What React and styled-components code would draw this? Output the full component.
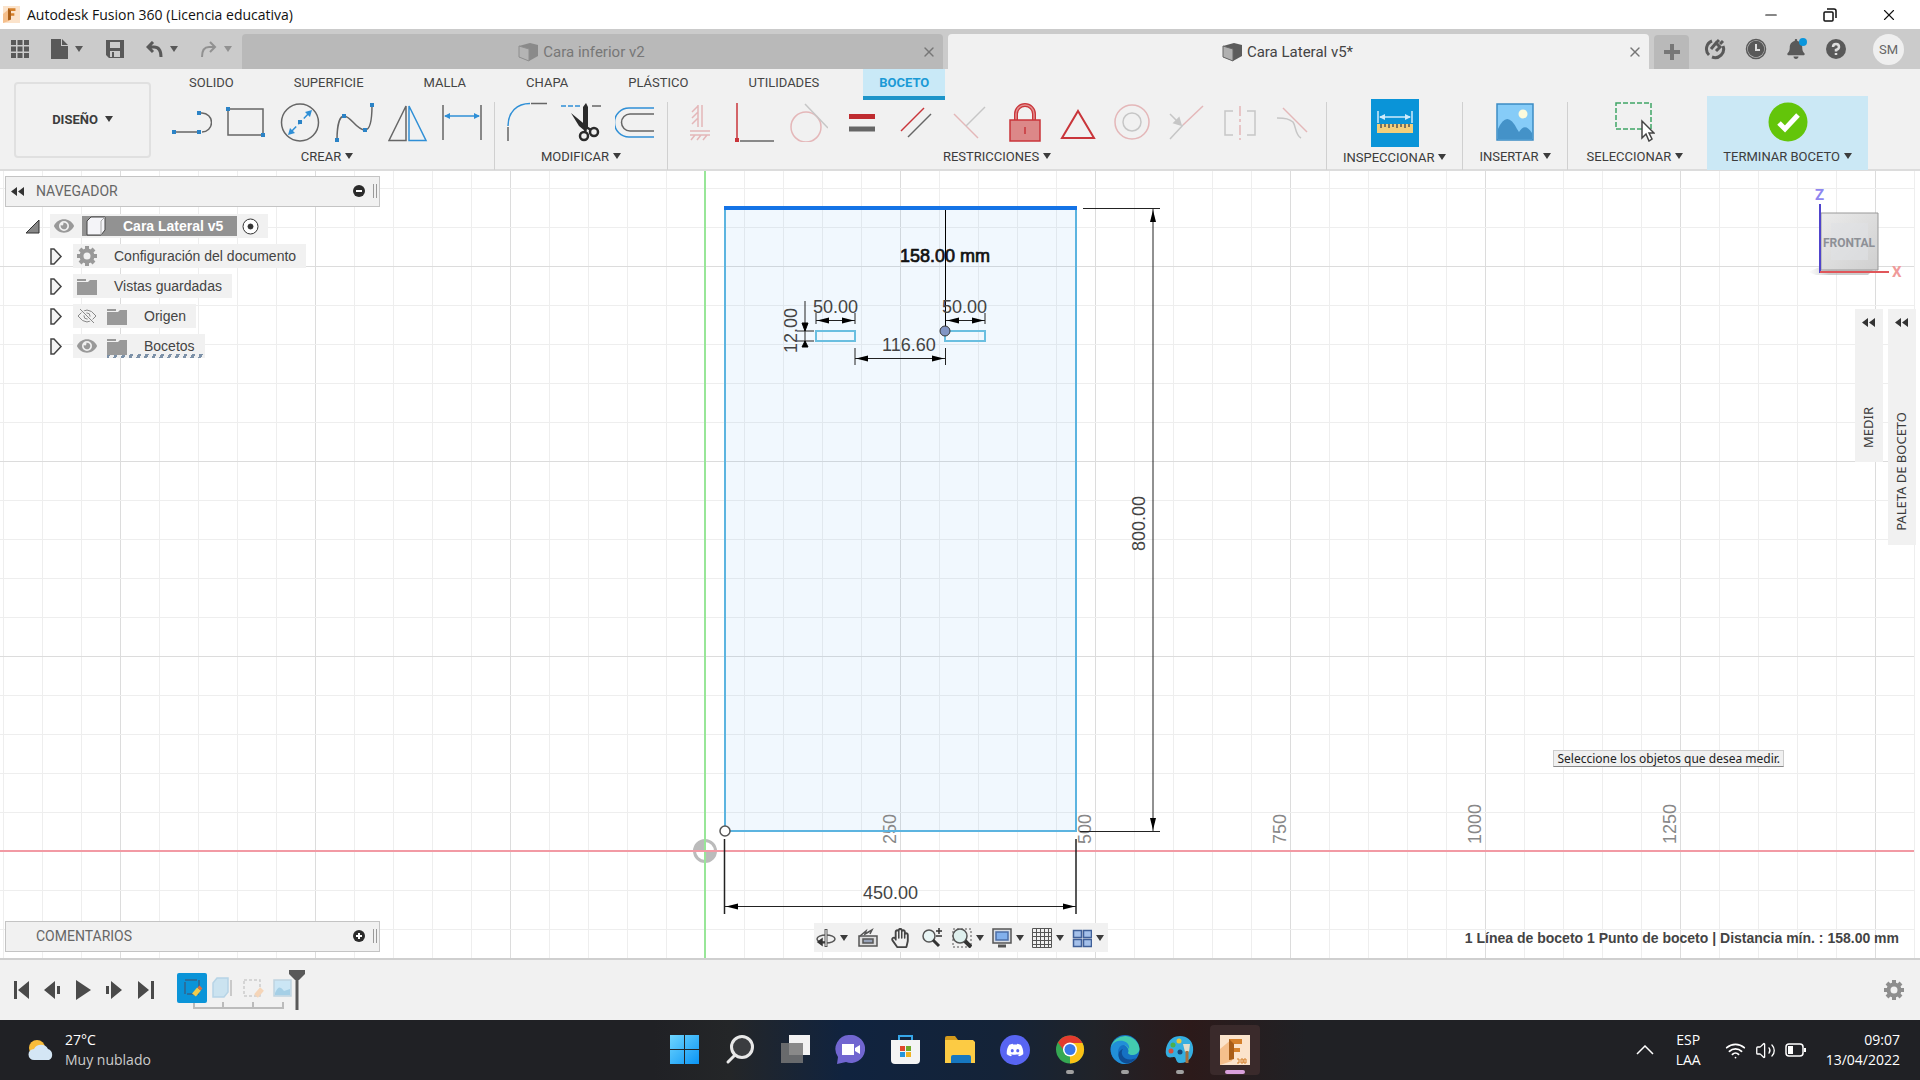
import React from "react";
import styled, { createGlobalStyle } from "styled-components";
import { FaBell, FaDiscord, FaEye, FaRegHandPaper } from "react-icons/fa";
import { Minus, Volume2, Wifi, X } from "lucide-react";

const GlobalStyle = createGlobalStyle`
  * {
    box-sizing: border-box;
  }
  body {
    margin: 0;
    background: #fff;
    color: #3c3c3c;
    font-family: Roboto, "Liberation Sans", sans-serif;
    font-size: 13px;
  }
  button {
    margin: 0;
    padding: 0;
    border: 0;
    background: none;
    color: inherit;
    font: inherit;
    cursor: pointer;
  }
  svg {
    display: block;
    flex: none;
  }
`;

const Window = styled.div`
  display: flex;
  flex-direction: column;
  min-height: 100vh;
`;

const Caret = styled.span`
  display: inline-block;
  border: 4px solid transparent;
  border-top: 6px solid ${({ $color }) => $color || "#3c3c3c"};
  border-bottom: 0;
`;

/* ---------- title bar ---------- */

const TitleBar = styled.header`
  display: flex;
  align-items: center;
  height: 29px;
  padding: 0 2px 0 3px;
  gap: 7px;
  color: #111;
  font-family: "Open Sans", sans-serif;
`;

const Title = styled.h1`
  flex: 1;
  margin: 0;
  font-size: 14px;
  font-weight: 400;
`;

const WindowButtons = styled.div`
  display: flex;
`;

const WindowButton = styled.button`
  display: flex;
  align-items: center;
  justify-content: center;
  width: 59px;
  height: 29px;
`;

/* ---------- document tabs ---------- */

const Strip = styled.div`
  display: flex;
  align-items: flex-end;
  height: 40px;
  background: #cbcbcb;
`;

const QuickTools = styled.div`
  display: flex;
  align-items: center;
  justify-content: space-between;
  width: 242px;
  height: 40px;
  padding: 0 10px 0 11px;
`;

const QuickButton = styled.button`
  display: flex;
  align-items: center;
  gap: 7px;
  opacity: ${({ $dim }) => ($dim ? 0.5 : 1)};
`;

const DocTabs = styled.div`
  display: flex;
  flex: 1;
  gap: 5px;
`;

const DocTab = styled.div`
  display: flex;
  flex: 1;
  align-items: center;
  height: 35px;
  padding-right: 6px;
  border-radius: 4px 4px 0 0;
  background: ${({ $active }) => ($active ? "#f1f1f1" : "#b9b9b9")};
  color: ${({ $active }) => ($active ? "#444" : "#777")};
`;

const DocName = styled.button`
  display: flex;
  flex: 1;
  align-items: center;
  justify-content: center;
  gap: 4px;
  font-size: 15px;
`;

const CloseTab = styled.button`
  display: flex;
  color: #777;
`;

const NewTab = styled.button`
  display: flex;
  align-items: center;
  justify-content: center;
  width: 35px;
  height: 34px;
  margin-left: 5px;
  border-radius: 4px 4px 0 0;
  background: #b9b9b9;
`;

const Account = styled.div`
  display: flex;
  align-items: center;
  height: 40px;
  padding: 0 16px 0 15px;
  gap: 19px;
  color: #595959;
`;

const Avatar = styled.button`
  width: 31px;
  height: 31px;
  margin-left: 7px;
  border-radius: 50%;
  background: #efefef;
  color: #666;
`;

const BellButton = styled.button`
  position: relative;
  &::after {
    content: "";
    position: absolute;
    top: -1px;
    right: -1px;
    width: 8px;
    height: 8px;
    border-radius: 50%;
    background: #0a96dc;
  }
`;

/* ---------- ribbon ---------- */

const Ribbon = styled.div`
  display: flex;
  height: 102px;
  border-bottom: 2px solid #dcdcdc;
  background: #f1f1f1;
`;

const Workspace = styled.button`
  display: flex;
  align-items: center;
  justify-content: center;
  gap: 7px;
  width: 137px;
  height: 76px;
  margin: 13px 9px 0 14px;
  padding-bottom: 2px;
  border: 2px solid #e0e0e0;
  border-radius: 4px;
  font-weight: 700;
`;

const RibbonMain = styled.div`
  flex: 1;
`;

const RibbonTabs = styled.nav`
  display: flex;
  gap: 28px;
  padding-left: 13px;
`;

const RibbonTab = styled.button`
  height: 31px;
  padding: 0 16px;
  border-bottom: 4px solid ${({ $active }) => ($active ? "#1c94c9" : "transparent")};
  background: ${({ $active }) => ($active ? "#c9e9f7" : "none")};
  color: ${({ $active }) => ($active ? "#1a9ad6" : "#444")};
  font-weight: ${({ $active }) => ($active ? 700 : 400)};
`;

const Groups = styled.div`
  display: flex;
  align-items: flex-end;
  height: 70px;
`;

const Group = styled.section`
  display: flex;
  flex-direction: column;
  align-items: center;
  height: 68px;
  padding: 0 ${({ $pad }) => $pad || 12}px;
  border-right: ${({ $last }) => ($last ? 0 : 1)}px solid #d0d0d0;
`;

const FinishGroup = styled(Group)`
  height: 74px;
  margin-left: 5px;
  padding: 6px 16px 0;
  border: 0;
  background: #cbe8f5;
`;

const Tools = styled.div`
  display: flex;
  align-items: center;
  height: 42px;
  gap: 14px;
`;

const ToolButton = styled.button`
  display: flex;
  align-items: center;
  justify-content: center;
  width: ${({ $selected }) => ($selected ? 48 : 40)}px;
  height: ${({ $selected }) => ($selected ? 48 : 40)}px;
  background: ${({ $selected }) => ($selected ? "#0a94d8" : "none")};
  opacity: ${({ $dim }) => ($dim ? 0.3 : 1)};
`;

const GroupLabel = styled.button`
  display: flex;
  align-items: center;
  gap: 4px;
  height: 28px;
  white-space: nowrap;
`;

/* ---------- canvas ---------- */

const Canvas = styled.main`
  position: relative;
  flex: 1;
  min-height: 640px;
  overflow: hidden;
  border-bottom: 2px solid #cfcfcf;
`;

const Drawing = styled.svg`
  position: absolute;
  inset: 0;
  width: 100%;
  height: 100%;
  font-family: "Liberation Sans", Arial, sans-serif;
  font-size: 18px;
`;

const Overlay = styled.div`
  position: absolute;
  inset: 0;
  display: grid;
  grid-template-columns: 1fr auto 1fr;
  padding: 5px 4px 6px 5px;
`;

const LeftDock = styled.aside`
  display: flex;
  flex-direction: column;
  justify-content: space-between;
  font-family: "Liberation Sans", Arial, sans-serif;
`;

const PanelHeader = styled.div`
  display: flex;
  align-items: center;
  width: 375px;
  height: 31px;
  padding: 0 2px 1px 5px;
  border: 1px solid #c4c4c4;
  background: #f1f1f1;
`;

const PanelTitle = styled.h2`
  flex: 1;
  margin: 0;
  padding-left: 12px;
  color: #666;
  font-family: Roboto, sans-serif;
  font-size: 14px;
  font-weight: 400;
`;

const Grip = styled.span`
  width: 4px;
  height: 14px;
  margin-left: 8px;
  border: solid #999;
  border-width: 0 1px;
`;

const PanelToggle = styled.button`
  width: 13px;
`;

const Tree = styled.ul`
  display: flex;
  flex-direction: column;
  gap: 6px;
  margin: 7px 0 0;
  padding: 0;
  list-style: none;
`;

const TreeRow = styled.li`
  display: flex;
  align-items: center;
  height: 24px;
  padding-left: ${({ $root }) => ($root ? 20 : 45)}px;
  gap: 10px;
`;

const TreeItem = styled.div`
  display: flex;
  align-items: center;
  height: 24px;
  padding: 0 ${({ $root }) => ($root ? 9 : 10)}px 0 4px;
  gap: ${({ $root }) => ($root ? 5 : 10)}px;
  background: #f1f1f1;
  color: #444;
  svg {
    color: #999;
  }
`;

const TreeName = styled.span`
  padding-left: 7px;
  font-size: 14px;
`;

const RootName = styled.span`
  display: flex;
  align-items: center;
  height: 20px;
  margin-left: 3px;
  padding: 0 14px 0 3px;
  gap: 16px;
  background: #929292;
  color: #fff;
  font-size: 14px;
  font-weight: 700;
`;

const Pending = styled.span`
  display: flex;
  align-items: center;
  height: 24px;
  margin-right: -10px;
  padding-right: 10px;
  gap: 10px;
  background: repeating-linear-gradient(115deg, #7c91a8 0 3px, transparent 3px 7px) 0 100% / 100% 4px no-repeat;
`;

const ViewBar = styled.div`
  display: flex;
  align-items: center;
  align-self: end;
  height: 29px;
  padding: 0 4px 0 2px;
  gap: 8px;
  background: #f1f1f1;
`;

const ViewButton = styled.button`
  display: flex;
  align-items: center;
  padding: 0 ${({ $menu }) => ($menu ? 0 : 2)}px;
  gap: 4px;
`;

const RightDock = styled.aside`
  display: flex;
  flex-direction: column;
  align-items: flex-end;
`;

const Palettes = styled.div`
  display: flex;
  flex: 1;
  align-items: flex-start;
  gap: 5px;
  margin-top: 13px;
`;

const Palette = styled.button`
  display: flex;
  flex-direction: column;
  align-items: center;
  justify-content: space-between;
  width: 28px;
  height: ${({ $tall }) => ($tall ? 236 : 153)}px;
  padding: 9px 2px 14px 0;
  background: #f1f1f1;
  span {
    writing-mode: vertical-rl;
    transform: rotate(180deg);
    font-family: "Noto Sans", sans-serif;
  }
`;

const Status = styled.output`
  padding: 0 17px 6px 0;
  color: #444;
  font-family: "Liberation Sans", Arial, sans-serif;
  font-size: 14px;
  font-weight: 700;
`;

const Hint = styled.div`
  position: absolute;
  right: 136px;
  bottom: 191px;
  padding: 0 3px;
  border: 1px solid #ccc;
  border-bottom-color: #888;
  background: #f0f0f0;
  color: #222;
  font-family: "Noto Sans", sans-serif;
  font-size: 12px;
  line-height: 15px;
`;

/* ---------- timeline ---------- */

const Timeline = styled.footer`
  display: flex;
  align-items: center;
  height: 60px;
  padding: 0 16px 0 13px;
  background: #f1f1f1;
  color: #8e8e8e;
`;

const Transport = styled.div`
  display: flex;
  gap: 13px;
`;

const Features = styled.div`
  flex: 1;
  padding-left: 22px;
`;

/* ---------- taskbar ---------- */

const Taskbar = styled.div`
  display: grid;
  grid-template-columns: 1fr auto 1fr;
  align-items: center;
  height: 60px;
  padding: 0 20px;
  background: linear-gradient(90deg, #202125 0 34%, #242628 38%, #10233f 44%, #142338 52%, #202329 57%, #2c1a1a 62%, #202125 68%);
  color: #fff;
  font-family: "Open Sans", sans-serif;
  font-size: 14px;
  line-height: 20px;
`;

const Weather = styled.div`
  display: flex;
  align-items: center;
  padding-left: 8px;
  gap: 10px;
  small {
    color: #ccc;
    font-size: 14px;
  }
`;

const Apps = styled.div`
  display: flex;
  gap: 5px;
`;

const AppButton = styled.button`
  display: flex;
  flex-direction: column;
  align-items: center;
  width: 50px;
  height: 50px;
  padding-top: 10px;
  gap: 5px;
  border-radius: 4px;
  background: ${({ $current }) => ($current ? "#3a2a2b" : "none")};
  &::after {
    content: "";
    width: ${({ $current }) => ($current ? 20 : 8)}px;
    height: 4px;
    border-radius: 2px;
    background: ${({ $current, $open }) => ($current ? "#d9a0dc" : $open ? "#a0a0a0" : "none")};
  }
`;

const Tray = styled.div`
  display: flex;
  align-items: center;
  justify-content: flex-end;
`;

const TrayText = styled.div`
  margin-left: ${({ $gap }) => $gap}px;
  text-align: ${({ $right }) => ($right ? "right" : "center")};
`;

const TrayIcons = styled.div`
  display: flex;
  align-items: center;
  margin-left: 24px;
  gap: 9px;
`;

/* ---------- icons ---------- */

const GREY = "#666";
const BLUE = "#2f8fd6";
const RED = "#c9353a";

const Dot = ({ x, y, color = "#2b83c6" }) => (
  <rect x={x - 2} y={y - 2} width="4" height="4" fill={color} stroke="none" />
);

const Glyph = ({ size = 40, w = size, h = size, children, ...rest }) => (
  <svg width={w} height={h} viewBox={`0 0 ${w} ${h}`} fill="none" stroke={GREY} strokeWidth="1.5" aria-hidden="true" {...rest}>
    {children}
  </svg>
);

const createTools = {
  Línea: (
    <>
      <path d="M2 30H27M27 11h3a9.5 9.5 0 0 1 0 19" />
      <Dot x={2} y={30} />
      <Dot x={27} y={30} />
      <Dot x={27} y={11} />
    </>
  ),
  Rectángulo: (
    <>
      <path d="M2 7H37V33H2Z" />
      <Dot x={2} y={7} />
      <Dot x={37} y={33} />
    </>
  ),
  Círculo: (
    <>
      <circle cx="20" cy="20.5" r="18.5" />
      <path d="M10 31 30 10" stroke={BLUE} strokeDasharray="9 3 5 3" />
      <path d="M8 33l2-7 5 5zM32 8l-7 2 5 5z" fill={BLUE} stroke="none" />
      <Dot x={20} y={20} />
    </>
  ),
  Spline: (
    <>
      <path d="M3 38C3 26 5 14 10 14C17 14 22 28 31 28C37 28 38 14 38 3" />
      <Dot x={3} y={38} />
      <Dot x={10} y={14} />
      <Dot x={31} y={28} />
      <Dot x={38} y={3} />
    </>
  ),
  Simetría: (
    <>
      <path d="M1 38.5 18 4V38.5Z" />
      <path d="M21 4 38 38.5H21Z" stroke={BLUE} />
    </>
  ),
  Cota: (
    <>
      <path d="M1 3V38M39 3V38" />
      <path d="M3 14H37" stroke={BLUE} />
      <path d="M2 14l6-3v6zM38 14l-6-3v6z" fill={BLUE} stroke="none" />
    </>
  ),
};

const modifyTools = {
  Empalme: (
    <>
      <path d="M1 39V25M24 1.5H40" />
      <path d="M1 24C1 10 10 1.5 23 1.5" stroke={BLUE} />
    </>
  ),
  Recortar: (
    <>
      <path d="M0 4H21" stroke={BLUE} strokeDasharray="5 2" />
      <path d="M31 4H40" />
      <path d="M10 11 27 25 24 29 18 24ZM22 5 25 1 27 5V27H22Z" fill="#2b2b2b" stroke="none" />
      <circle cx="23" cy="34" r="4" stroke="#2b2b2b" strokeWidth="2.5" />
      <circle cx="33" cy="30" r="4" stroke="#2b2b2b" strokeWidth="2.5" />
      <path d="M24 31 25 25 30 28" stroke="#2b2b2b" strokeWidth="2.5" />
    </>
  ),
  Desfase: (
    <>
      <path d="M39 6H14A14 14 0 0 0 14 35H39" stroke={BLUE} />
      <path d="M39 12H15A8.5 8.5 0 0 0 15 29H39" />
    </>
  ),
};

const constraints = [
  ["Fijar", true, <path key="p" d="M18 3V25M22 3V25M18 4l-6 6M18 10l-6 6M18 16l-6 6M10 29H30M10 33H30M15 33l-4 5M21 33l-4 5M27 33l-4 5" stroke={RED} />],
  ["Perpendicular", false, <g key="p"><path d="M3 1V36" stroke={RED} /><path d="M6 39H40" /><Dot x={3} y={38} color={RED} /></g>],
  ["Tangente", true, <g key="p"><circle cx="18" cy="25" r="15" stroke={RED} /><path d="M17 2 40 26" /></g>],
  ["Igual", false, <g key="p"><path d="M7 14.5H33" stroke="#bf2c30" strokeWidth="5" /><path d="M7 27H33" strokeWidth="5" /></g>],
  ["Paralelo", false, <g key="p"><path d="M5 29 28 6" stroke={RED} /><path d="M12 35 35 12" /></g>],
  ["Coincidente", true, <g key="p"><path d="M4 12 28 36" stroke={RED} /><path d="M16 24 35 5" /></g>],
  ["Bloquear", false, <g key="p"><path d="M12 19V12a9 9 0 0 1 18 0V19" stroke={RED} strokeWidth="4" /><path d="M12 19V12a9 9 0 0 1 18 0V19" stroke="#e28d8d" /><path d="M6 18H36V39H6Z" fill="#dc8888" stroke={RED} /><path d="M21 25v7" stroke={RED} /></g>],
  ["Punto medio", false, <path key="p" d="M20 9 36 36H4Z" stroke={RED} strokeWidth="2" />],
  ["Concéntrico", true, <g key="p"><circle cx="20" cy="20" r="17" stroke={RED} /><circle cx="20" cy="20" r="9" /></g>],
  ["Colineal", true, <g key="p"><path d="M4 37 17 23M4 12 14 22" /><path d="M15 23l-7-2 5-5z" fill={GREY} /><path d="M17 23 37 4" stroke={RED} /></g>],
  ["Simétrico", true, <g key="p"><path d="M13 9H5V33H13M27 9H35V33H27" /><path d="M20 4V38" stroke={RED} strokeDasharray="10 3 3 3" /></g>],
  ["Curvatura", true, <g key="p"><path d="M9 6 33 30" stroke={RED} /><path d="M3 16C12 16 15 17 19 20C22 24 21 33 27 36" /></g>],
];

const DocCube = ({ dim }) => (
  <svg width="21" height="20" viewBox="0 0 21 20" opacity={dim ? 0.5 : 1} aria-hidden="true">
    <path d="M1 4 12 1 20 3V14L11 19 1 15Z" fill="#5c5c5c" />
    <path d="M1 4 11 7V19L1 15Z" fill="#b0b0b0" stroke="#666" />
  </svg>
);

const FusionLogo = ({ size, label }) => (
  <svg width={size} height={size} viewBox="0 0 30 30" aria-hidden="true">
    <path d="M0 0H30V30H0Z" fill="#fbe3cb" />
    <path d="M0 14 12 4V26L0 30Z" fill="#f5bf8c" />
    <path d="M9 4H22V9H14V13H20V17H14V24L9 25Z" fill="#d5812c" />
    <path d="M9 4 14 9V24L9 25Z" fill="#a85d18" />
    {label && <path d="M17 24h2v4h-2M21 24h2v4h-2zM25 24h-1v4h2v-4z" stroke="#d5812c" fill="none" />}
  </svg>
);

const Gear = () => (
  <svg width="20" height="20" viewBox="0 0 20 20" fill="none" stroke="currentColor" aria-hidden="true">
    <circle cx="10" cy="10" r="5.5" strokeWidth="4" />
    <path
      d="M10 0V4M10 16V20M0 10H4M16 10H20M3 3 6 6M14 14 17 17M3 17 6 14M14 6 17 3"
      strokeWidth="4"
    />
  </svg>
);

const HiddenEye = () => (
  <svg width="20" height="16" viewBox="0 0 20 16" fill="none" stroke="#888" aria-hidden="true">
    <path d="M1 8Q10-4 19 8Q10 20 1 8Z" />
    <circle cx="10" cy="8" r="3" />
    <path d="M3 1 17 15" stroke="#f1f1f1" strokeWidth="3" />
    <path d="M3 1 17 15" />
  </svg>
);

const Rewind = () => (
  <svg width="13" height="9" viewBox="0 0 13 9" fill="#333" aria-hidden="true">
    <path d="M6 0V9L0 4.5ZM13 0V9L7 4.5Z" />
  </svg>
);

const ToggleIcon = ({ plus }) => (
  <svg width="12" height="12" viewBox="0 0 12 12" aria-hidden="true">
    <circle cx="6" cy="6" r="6" fill="#2b2b2b" />
    <path d={plus ? "M3 6H9M6 3V9" : "M3 6H9"} stroke="#fff" strokeWidth="2" />
  </svg>
);

const Expander = () => (
  <svg width="13" height="17" viewBox="0 0 13 17" fill="#f4f4f4" stroke="#444" strokeWidth="1.5" aria-hidden="true">
    <path d="M1 1H4L11 8.5 4 16H1Z" />
  </svg>
);

const Folder = () => (
  <svg width="20" height="17" viewBox="0 0 20 17" fill="#999" aria-hidden="true">
    <path d="M0 1H9V3H0ZM0 4H11L13 2H20V17H0Z" />
  </svg>
);

/* ---------- sketch ---------- */

const UNIT = 39;
const range = (from, to) => Array.from({ length: to - from + 1 }, (_, i) => from + i);

// Grid lines around the origin, every fifth one is stronger
const Grid = () => (
  <g strokeWidth="1">
    {range(-18, 31).map(k => (
      <path key={`v${k}`} d={`M${k * UNIT + 0.5} -681V108`} stroke={k % 5 ? "#eeeeee" : "#dcdcdc"} />
    ))}
    {range(-17, 2).map(k => (
      <path key={`h${k}`} d={`M-705 ${k * UNIT + 0.5}H1209`} stroke={k % 5 ? "#eeeeee" : "#dcdcdc"} />
    ))}
  </g>
);

const Dimension = ({ x, y, length, vertical, arrow = 12 }) => (
  <g transform={`translate(${x} ${y}) rotate(${vertical ? 90 : 0})`}>
    <path d={`M0 0H${length}`} stroke="#222" />
    <path
      d={`M1 0l${arrow}-3v6zM${length - 1} 0l${-arrow}-3v6z`}
      fill="#000"
    />
  </g>
);

const VerticalText = ({ x, y, children, fill }) => (
  <text transform={`translate(${x} ${y}) rotate(-90)`} fill={fill}>
    {children}
  </text>
);

const Sketch = () => (
  <Drawing viewBox="0 0 1920 787" preserveAspectRatio="xMidYMid slice">
    <g transform="translate(705 680)">
      <Grid />
      <path d="M20-643H371V-20H20Z" fill="#0a8ce6" fillOpacity="0.06" />
      <circle r="10.5" fill="#fff" stroke="#bbb" strokeWidth="3" />
      <path d="M0 0V-10A10 10 0 0 0-10 0ZM0 0V10A10 10 0 0 0 10 0Z" fill="#bbb" />
      <path d="M0-681V108" stroke="#98e698" strokeWidth="2" />
      <path d="M-705 0H1209" stroke="#f29aa4" strokeWidth="2" />
      {range(1, 5).map(k => (
        <VerticalText key={k} x={k * 5 * UNIT - 4} y={-7} fill="#888">
          {k * 250}
        </VerticalText>
      ))}
      <path d="M20-643V-20H371V-643" fill="none" stroke="#5cb4e0" strokeWidth="2" />
      <path d="M19-643H372" stroke="#1473e6" strokeWidth="4" />
      <path d="M111-520H150V-510H111ZM240-520H280V-510H240Z" fill="none" stroke="#6bbfe0" strokeWidth="2" />
      <g stroke="#222" fill="none">
        <path d="M378-642.5H455M375-19.5H455" />
        <path d="M19.5-12V63M371-12V63" strokeWidth="1.5" />
        <path d="M150-503V-486M240.5-503V-486M111-538V-527M150-538V-527M280-538V-527" />
        <path d="M100-550V-506M92-520H109M92-510H109" />
        <path d="M240.5-641V-520" stroke="#000" />
      </g>
      <path d="M100-520l-3-8h6zM100-510l-3 6h6z" fill="#000" stroke="#000" />
      <Dimension x={448} y={-642} length={622} vertical />
      <Dimension x={20} y={55.5} length={351} />
      <Dimension x={150} y={-492.5} length={90} />
      <Dimension x={111} y={-530.5} length={39} />
      <Dimension x={241} y={-530.5} length={39} />
      <g fill="#444">
        <text x="108" y="-538">50.00</text>
        <text x="237" y="-538">50.00</text>
        <text x="177" y="-500">116.60</text>
        <text x="158" y="48">450.00</text>
        <VerticalText x={92} y={-498}>12.00</VerticalText>
        <VerticalText x={440} y={-300}>800.00</VerticalText>
      </g>
      <text x="195" y="-589" fill="#111" stroke="#111" strokeWidth="0.7">158.00 mm</text>
      <circle cx="240" cy="-520" r="5" fill="#8195c4" stroke="#333" />
      <circle cx="20" cy="-20" r="5" fill="#fff" stroke="#555" strokeWidth="1.5" />
    </g>
  </Drawing>
);

const ViewCube = () => (
  <svg width="114" height="120" viewBox="0 0 114 120" fontFamily="Roboto, sans-serif" fontWeight="700">
    <defs>
      <linearGradient id="cube" x1="0" y1="0" x2="1" y2="1">
        <stop offset="0" stopColor="#ebebeb" />
        <stop offset="1" stopColor="#cfcfcf" />
      </linearGradient>
      <linearGradient id="shade">
        <stop offset="0" stopColor="#bbb" stopOpacity="0" />
        <stop offset="0.3" stopColor="#aaa" />
      </linearGradient>
    </defs>
    <path d="M6 96 22 89H76L66 99H14Z" fill="url(#shade)" opacity=".6" />
    <path d="M19 37H76V94H19Z" fill="url(#cube)" stroke="#999" />
    <path d="M29 47H66V84H29Z" fill="#dfe1e4" opacity=".6" />
    <path d="M18 28V97" stroke="#5044cc" strokeWidth="2" />
    <path d="M18 96H87" stroke="#e0565a" strokeWidth="2" />
    <text x="13" y="24" fontSize="15" fill="#8f86f0">Z</text>
    <text x="90" y="101" fontSize="15" fill="#f09a9a">X</text>
    <text x="47" y="71" fontSize="12" fill="#8d9096" textAnchor="middle">FRONTAL</text>
  </svg>
);

const viewTools = [
  ["Órbita", true, <g key="i"><ellipse cx="10" cy="11" rx="9" ry="4" /><path d="M10 1V19" strokeWidth="3" /><path d="M10 2V18" stroke="#fff" strokeWidth="1" /><path d="M2 14H9M2 14l4-3v6z" fill="#333" stroke="#333" /></g>],
  ["Mirar a", false, <g key="i"><path d="M1 8H19V18H1Z" fill="#ddd" /><path d="M5 11H15V15H5Z" fill="#98a3b8" /><path d="M2 8 8 3 7 6 14 2 12 6" /></g>],
  ["Encuadre", false, null],
  ["Zoom", false, <g key="i"><circle cx="7" cy="8" r="6" fill="#e8f4f4" /><path d="M11 12 17 18" stroke="#333" strokeWidth="3" /><path d="M14 3H20M17 0V6M14 8H20" stroke="#333" /></g>],
  ["Ajustar", true, <g key="i"><path d="M1 1H19V19H1Z" strokeDasharray="2 2" strokeWidth="1" /><circle cx="8" cy="8" r="7" fill="#dff0ee" /><path d="M13 13 19 19" stroke="#333" strokeWidth="4" /></g>],
  ["Visualización", true, <g key="i"><path d="M1 1H19V15H1Z" fill="#d8dde4" /><path d="M4 4H16V12H4Z" fill="#82b0ec" stroke="#4c6fa8" /><path d="M6 18H14" strokeWidth="3" /></g>],
  ["Rejilla", true, <path key="i" d="M.5 .5H19.500V19.500H.5ZM4.500 1V19M8.500 1V19M12.500 1V19M16.500 1V19M1 4.500H19M1 8.500H19M1 12.500H19M1 16.500H19" strokeWidth="1" />],
  ["Ventanas", true, <path key="i" d="M1.500 2.500H9.500V9.500H1.500ZM11.500 2.500H19.500V9.500H11.500ZM1.500 11.500H9.500V18.500H1.500ZM11.500 11.500H19.500V18.500H11.500Z" fill="#a4c0ea" stroke="#3f5f98" />],
];

const transport = [
  ["Inicio", "M1 1H4V19H1ZM5 10 16 1V19Z"],
  ["Anterior", "M0 10 11 1V19ZM13 6H16V14H13Z"],
  ["Reproducir", "M1 0 16 10 1 20Z"],
  ["Siguiente", "M0 6H3V14H0ZM5 1 16 10 5 19Z"],
  ["Final", "M1 1 12 10 1 19ZM14 1H17V19H14Z"],
];

const apps = [
  ["Inicio", <path key="i" d="M0 0H14V14H0ZM15 0H29V14H15ZM0 15H14V29H0ZM15 15H29V29H15Z" fill="url(#win)" />],
  ["Buscar", <g key="i" fill="#3b3d40" stroke="#e8e8e8" strokeWidth="3"><path d="M10 20 3 27" strokeLinecap="round" /><circle cx="17" cy="12" r="10.5" /></g>],
  ["Vista de tareas", <g key="i"><path d="M9 0H30V20H9Z" fill="#f2f2f2" /><path d="M1 8H23V28H1Z" fill="#777" opacity=".85" /></g>],
  ["Chat", <g key="i"><path d="M15 0A14 14 0 1 1 11 27L2 29 3 22A14 14 0 0 1 15 0Z" fill="#7166d0" /><path d="M7 9H19V20H7ZM20 13 25 10V19L20 16Z" fill="#fff" /></g>],
  ["Store", <g key="i"><path d="M9 6V1H22V6" fill="none" stroke="#36a6e8" strokeWidth="2" /><path d="M1 5H30V25Q30 29 26 29H5Q1 29 1 25Z" fill="#f4f4f4" /><path d="M10 11H15V16H10Z" fill="#e0482c" /><path d="M16 11H21V16H16Z" fill="#6fa82c" /><path d="M10 17H15V22H10Z" fill="#2596dc" /><path d="M16 17H21V22H16Z" fill="#f0b323" /></g>],
  ["Explorador", <g key="i"><path d="M0 3Q0 1 2 1H10L13 5H0Z" fill="#d49a1c" /><path d="M0 5H28L30 7V28H0Z" fill="#fccb44" /><path d="M6 28V22Q6 20 8 20H24Q26 20 26 22V28Z" fill="#1677c0" /></g>],
  ["Discord", null],
  ["Chrome", <g key="i"><circle cx="15" cy="14.5" r="14" fill="#35a853" /><path d="M15 14.5 3 7.5 15 8H27.5A14 14 0 0 1 15 28.5Z" fill="#fbc116" /><path d="M3 7.5A14 14 0 0 1 27.5 8H15L10 17Z" fill="#e33b2e" /><circle cx="15" cy="14.5" r="7" fill="#fff" /><circle cx="15" cy="14.5" r="5.5" fill="#3a78e8" /></g>, true],
  ["Edge", <g key="i"><circle cx="15" cy="14.5" r="14.5" fill="#1571c4" /><path d="M1 12A14.5 14.5 0 0 1 29.5 14C29.5 20 20 22 18 18C21 12 10 4 1 12Z" fill="#43cbb0" /><path d="M1 12C5 2 21 5 19 14C15 7 8 10 8 18C8 24 13 28 17 29A14.5 14.5 0 0 1 1 12Z" fill="#218fd8" /><path d="M13 14C9 19 15 28 26 23C22 29 14 30 10 25C7 20 9 15 13 14Z" fill="#0f4d94" /></g>, true],
  ["Paint", <g key="i"><path d="M15 1C4 1 0 12 1 19C2 24 7 22 9 22C12 22 10 28 15 28C25 28 29 20 28 12C27 5 22 1 15 1Z" fill="#35aee0" /><circle cx="8" cy="10" r="2.5" fill="#4cb04c" /><circle cx="14" cy="6" r="2.5" fill="#e8c83c" /><circle cx="6" cy="16" r="2.5" fill="#d8503c" /><circle cx="15" cy="17" r="2.5" fill="#184878" /><path d="M18 9h7l-1 8h-4z" fill="#e0dccb" /><path d="M22 16V28" stroke="#a8703c" strokeWidth="3" /></g>, true],
];

const Tool = ({ name, children, ...rest }) => (
  <ToolButton aria-label={name} {...rest}>
    <Glyph>{children}</Glyph>
  </ToolButton>
);

const Label = ({ children }) => (
  <GroupLabel>
    {children}
    <Caret />
  </GroupLabel>
);

const Documents = () => (
  <Strip>
    <QuickTools>
      <QuickButton aria-label="Datos">
        <Glyph size={18} fill="#595959" stroke="none">
          <path d="M0 0h5v5H0zM6.5 0h5v5h-5zM13 0h5v5h-5zM0 6.5h5v5H0zM6.5 6.5h5v5h-5zM13 6.5h5v5h-5zM0 13h5v5H0zM6.5 13h5v5h-5zM13 13h5v5h-5z" />
        </Glyph>
      </QuickButton>
      <QuickButton aria-label="Archivo">
        <Glyph w={17} h={20} fill="#595959" stroke="none">
          <path d="M0 0H10V7H17V20H0ZM11 0 17 6H11Z" />
        </Glyph>
        <Caret $color="#595959" />
      </QuickButton>
      <QuickButton aria-label="Guardar">
        <Glyph size={18} fill="#595959" stroke="none">
          <path fillRule="evenodd" d="M0 0H18V18H3L0 15ZM4 2V8H14V2ZM4 11V17H6V12H8V17H14V11Z" />
        </Glyph>
      </QuickButton>
      <QuickButton aria-label="Deshacer">
        <Glyph w={17} h={16} stroke="#595959" strokeWidth="3">
          <path d="M7 1 2 6 7 11M2 6H8Q15 6 15 16" />
        </Glyph>
        <Caret $color="#595959" />
      </QuickButton>
      <QuickButton aria-label="Rehacer" $dim>
        <Glyph w={17} h={16} stroke="#595959" strokeWidth="2">
          <path d="M10 1 15 6 10 11M15 6H9Q2 6 2 16" />
        </Glyph>
        <Caret $color="#595959" />
      </QuickButton>
    </QuickTools>
    <DocTabs>
      <DocTab>
        <DocName>
          <DocCube dim />
          Cara inferior v2
        </DocName>
        <CloseTab aria-label="Cerrar">
          <X size={16} />
        </CloseTab>
      </DocTab>
      <DocTab $active>
        <DocName>
          <DocCube />
          Cara Lateral v5*
        </DocName>
        <CloseTab aria-label="Cerrar">
          <X size={16} />
        </CloseTab>
      </DocTab>
    </DocTabs>
    <NewTab aria-label="Nuevo">
      <Glyph size={16} stroke="#777" strokeWidth="4">
        <path d="M8 0V16M0 8H16" />
      </Glyph>
    </NewTab>
    <Account>
      <button aria-label="Extensiones">
        <Glyph size={22} stroke="#595959" strokeWidth="3">
          <path d="M8 3A8.5 8.5 0 0 0 5 17M8 19A8.5 8.5 0 0 0 19 8" />
          <path d="M7 11 12 5 16 9 12 13M16 6 19 3M13 4 15 2" />
        </Glyph>
      </button>
      <button aria-label="Estado">
        <Glyph size={22} stroke="#595959">
          <circle cx="11" cy="11" r="9.5" />
          <circle cx="11" cy="11" r="7.5" fill="#595959" />
          <path d="M11 6V12H15" stroke="#ddd" strokeWidth="2" />
        </Glyph>
      </button>
      <BellButton aria-label="Notificaciones">
        <FaBell size={20} />
      </BellButton>
      <button aria-label="Ayuda">
        <Glyph size={22} stroke="#ddd" strokeWidth="2.5">
          <circle cx="11" cy="11" r="10" fill="#595959" stroke="none" />
          <path d="M8 9Q8 6 11 6T14 9Q14 11 11 12V13.5M11 15V17" />
        </Glyph>
      </button>
      <Avatar>SM</Avatar>
    </Account>
  </Strip>
);

const Commands = () => (
  <Ribbon>
    <Workspace>
      DISEÑO
      <Caret />
    </Workspace>
    <RibbonMain>
      <RibbonTabs>
        {["SOLIDO", "SUPERFICIE", "MALLA", "CHAPA", "PLÁSTICO", "UTILIDADES", "BOCETO"].map(name => (
          <RibbonTab key={name} $active={name === "BOCETO"}>
            {name}
          </RibbonTab>
        ))}
      </RibbonTabs>
      <Groups>
        <Group>
          <Tools>
            {Object.entries(createTools).map(([name, icon]) => (
              <Tool key={name} name={name}>{icon}</Tool>
            ))}
          </Tools>
          <Label>CREAR</Label>
        </Group>
        <Group>
          <Tools>
            {Object.entries(modifyTools).map(([name, icon]) => (
              <Tool key={name} name={name}>{icon}</Tool>
            ))}
          </Tools>
          <Label>MODIFICAR</Label>
        </Group>
        <Group>
          <Tools>
            {constraints.map(([name, dim, icon]) => (
              <Tool key={name} name={name} $dim={dim}>{icon}</Tool>
            ))}
          </Tools>
          <Label>RESTRICCIONES</Label>
        </Group>
        <Group $pad={16}>
          <Tools>
            <Tool name="Medir" $selected>
              <path d="M3 8V20M37 8V20M5 14H35" stroke="#cfeafa" />
              <path d="M4 14l6-3v6zM36 14l-6-3v6z" fill="#cfeafa" stroke="none" />
              <path d="M2 21H38V30H2Z" fill="#f3cf7c" stroke="none" />
              <path d="M6 21v4M10 21v3M14 21v4M18 21v3M22 21v4M26 21v3M30 21v4M34 21v3" stroke="#555" />
            </Tool>
          </Tools>
          <Label>INSPECCIONAR</Label>
        </Group>
        <Group $pad={16}>
          <Tools>
            <Tool name="Lienzo">
              <path d="M2 2H38V38H2Z" fill="#86ccf8" stroke="#3d8cc4" />
              <path d="M3 27Q12 7 22 27L24 30Q30 20 37 31V37H3Z" fill="#4492c8" stroke="none" />
              <circle cx="28" cy="12" r="4.5" fill="#fdfbdc" stroke="none" />
            </Tool>
          </Tools>
          <Label>INSERTAR</Label>
        </Group>
        <Group $pad={19} $last>
          <Tools>
            <Tool name="Seleccionar">
              <path d="M1 1H36V27H1Z" stroke="#3fa565" strokeDasharray="5 2" />
              <path d="M27 19V36L31 32 34 39 37 37 34 31H39Z" fill="#fff" stroke="#444" />
            </Tool>
          </Tools>
          <Label>SELECCIONAR</Label>
        </Group>
        <FinishGroup>
          <Tools>
            <Tool name="Terminar">
              <circle cx="20" cy="20" r="19.5" fill="#63c50a" stroke="none" />
              <path d="M11 21 17 27 30 13" stroke="#fff" strokeWidth="5" />
            </Tool>
          </Tools>
          <Label>TERMINAR BOCETO</Label>
        </FinishGroup>
      </Groups>
    </RibbonMain>
  </Ribbon>
);

const Browser = () => (
  <div>
    <PanelHeader>
      <PanelToggle aria-label="Contraer">
        <Rewind />
      </PanelToggle>
      <PanelTitle>NAVEGADOR</PanelTitle>
      <ToggleIcon />
      <Grip />
    </PanelHeader>
    <Tree>
      <TreeRow $root>
        <svg width="15" height="15" viewBox="0 0 15 15" aria-hidden="true">
          <path d="M1 14H14V1Z" fill="#888" stroke="#333" />
        </svg>
        <TreeItem $root>
          <FaEye size={20} />
          <RootName>
            <svg width="22" height="20" viewBox="0 0 22 20" aria-hidden="true">
              <path d="M2 5 6 1H20V14L16 19H2Z" fill="#f4f4f8" stroke="#444" />
              <path d="M16 19V5L20 1" fill="none" stroke="#aaa" />
            </svg>
            Cara Lateral v5
          </RootName>
          <svg width="17" height="17" viewBox="0 0 17 17" fill="#fff" stroke="#333" aria-hidden="true">
            <circle cx="8.5" cy="8.5" r="7.5" />
            <circle cx="8.5" cy="8.5" r="2.5" fill="#333" />
          </svg>
        </TreeItem>
      </TreeRow>
      <TreeRow>
        <Expander />
        <TreeItem>
          <Gear />
          <TreeName>Configuración del documento</TreeName>
        </TreeItem>
      </TreeRow>
      <TreeRow>
        <Expander />
        <TreeItem>
          <Folder />
          <TreeName>Vistas guardadas</TreeName>
        </TreeItem>
      </TreeRow>
      <TreeRow>
        <Expander />
        <TreeItem>
          <HiddenEye />
          <Folder />
          <TreeName>Origen</TreeName>
        </TreeItem>
      </TreeRow>
      <TreeRow>
        <Expander />
        <TreeItem>
          <FaEye size={20} />
          <Pending>
            <Folder />
            <TreeName>Bocetos</TreeName>
          </Pending>
        </TreeItem>
      </TreeRow>
    </Tree>
  </div>
);

const Viewport = () => (
  <Canvas>
    <Sketch />
    <Overlay>
      <LeftDock>
        <Browser />
        <PanelHeader>
          <PanelToggle as="span" />
          <PanelTitle>COMENTARIOS</PanelTitle>
          <ToggleIcon plus />
          <Grip />
        </PanelHeader>
      </LeftDock>
      <ViewBar>
        {viewTools.map(([name, menu, icon]) => (
          <ViewButton key={name} aria-label={name} $menu={menu}>
            {icon ? <Glyph size={20} stroke="#555">{icon}</Glyph> : <FaRegHandPaper size={20} color="#444" />}
            {menu && <Caret />}
          </ViewButton>
        ))}
      </ViewBar>
      <RightDock>
        <ViewCube />
        <Palettes>
          <Palette>
            <Rewind />
            <span>MEDIR</span>
          </Palette>
          <Palette $tall>
            <Rewind />
            <span>PALETA DE BOCETO</span>
          </Palette>
        </Palettes>
        <Status>1 Línea de boceto 1 Punto de boceto | Distancia mín. : 158.00 mm</Status>
      </RightDock>
    </Overlay>
    <Hint>Seleccione los objetos que desea medir.</Hint>
  </Canvas>
);

const History = () => (
  <Timeline>
    <Transport>
      {transport.map(([name, d]) => (
        <button key={name} aria-label={name}>
          <Glyph w={18} h={20} fill="#4a4a4a" stroke="none">
            <path d={d} />
          </Glyph>
        </button>
      ))}
    </Transport>
    <Features>
      <Glyph w={130} h={42}>
        <path d="M17 33V39H106V33M46 33V39M76 33V39" stroke="#bbb" strokeWidth="2" />
        <rect y="4" width="30" height="30" rx="2" fill="#0a94d8" stroke="none" />
        <path d="M8 11H22V25H8Z" stroke="#33648a" strokeDasharray="12 2" />
        <path d="M17 26 22 20" stroke="#f0cc4c" strokeWidth="5" />
        <path d="M22 20 24 18" stroke="#e06c3c" strokeWidth="4" />
        <path d="M36 14 40 9H51V23L47 28H36Z" fill="#cbe3f0" stroke="#b7d4e6" />
        <path d="M54 11V27" stroke="#bbb" />
        <path d="M67 11H83V27H67Z" stroke="#ccc" strokeDasharray="3 2" />
        <path d="M79 27 85 20" stroke="#f5d5b8" strokeWidth="5" />
        <path d="M97 11H114V27H97Z" fill="#cbe6f5" stroke="#c0d4e0" />
        <path d="M98 24Q102 14 107 22L113 20V26H98Z" fill="#a5cfe6" stroke="none" />
        <path d="M112 1H128V5L122 11H118L112 5Z" fill="#595959" stroke="none" />
        <path d="M120 8V41" stroke="#595959" strokeWidth="3" />
      </Glyph>
    </Features>
    <button aria-label="Configuración">
      <Gear />
    </button>
  </Timeline>
);

const SystemBar = () => (
  <Taskbar>
    <Weather>
      <svg width="27" height="22" viewBox="0 0 27 22" aria-hidden="true">
        <circle cx="9" cy="9" r="8" fill="#f8bc3a" />
        <path d="M6 21A5.5 5.5 0 0 1 6 10A8 8 0 0 1 20 10A6 6 0 0 1 21 21Z" fill="#d4e6f5" />
      </svg>
      <div>
        27°C
        <br />
        <small>Muy nublado</small>
      </div>
    </Weather>
    <Apps>
      {apps.map(([name, icon, open]) => (
        <AppButton key={name} aria-label={name} $open={open}>
          <svg width="30" height="30" viewBox="0 0 30 30" aria-hidden="true">
            <defs>
              <linearGradient id="win" x1="0" y1="0" x2="1" y2="1">
                <stop offset="0" stopColor="#6fd6ff" />
                <stop offset="1" stopColor="#0a94f4" />
              </linearGradient>
            </defs>
            {icon || (
              <>
                <circle cx="15" cy="15" r="15" fill="#5865f2" />
                <FaDiscord x="6" y="6" size={18} color="#fff" />
              </>
            )}
          </svg>
        </AppButton>
      ))}
      <AppButton $current aria-label="Fusion 360">
        <FusionLogo size={30} label />
      </AppButton>
    </Apps>
    <Tray>
      <Glyph w={18} h={10} stroke="#fff">
        <path d="M1 9 9 1 17 9" />
      </Glyph>
      <TrayText $gap={22}>
        ESP
        <br />
        LAA
      </TrayText>
      <TrayIcons>
        <Wifi size={21} strokeWidth={2} />
        <Volume2 size={21} strokeWidth={1.5} />
        <Glyph w={21} h={14} stroke="#fff">
          <rect x="1" y="1" width="17" height="12" rx="3" />
          <path d="M3 3H8V11H3ZM19 5h2v4h-2z" fill="#fff" stroke="none" />
        </Glyph>
      </TrayIcons>
      <TrayText $gap={20} $right>
        09:07
        <br />
        13/04/2022
      </TrayText>
    </Tray>
  </Taskbar>
);

const App = () => (
  <Window>
    <GlobalStyle />
    <TitleBar>
      <FusionLogo size={17} />
      <Title>Autodesk Fusion 360 (Licencia educativa)</Title>
      <WindowButtons>
        <WindowButton aria-label="Minimizar">
          <Minus size={18} strokeWidth={1.5} />
        </WindowButton>
        <WindowButton aria-label="Restaurar">
          <Glyph size={14} stroke="#111">
            <rect x="1" y="4" width="9" height="9" rx="1" />
            <path d="M4 1H11Q13 1 13 3V10" />
          </Glyph>
        </WindowButton>
        <WindowButton aria-label="Cerrar">
          <X size={18} strokeWidth={1.5} />
        </WindowButton>
      </WindowButtons>
    </TitleBar>
    <Documents />
    <Commands />
    <Viewport />
    <History />
    <SystemBar />
  </Window>
);

export default App;
